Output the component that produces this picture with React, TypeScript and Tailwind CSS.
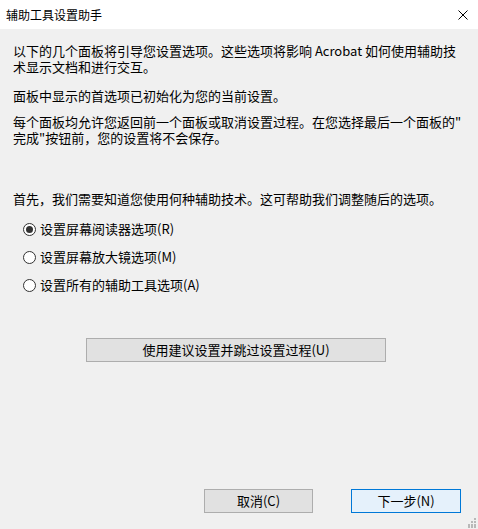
import React from "react";

const font = { fontFamily: '"Noto Sans CJK SC", "Noto Sans", sans-serif' };

function Radio({ checked, label }: { checked?: boolean; label: string }) {
  return (
    <label className="flex items-center h-[28px] gap-[4px]">
      <span className="w-[13px] h-[13px] rounded-full border border-[#333] bg-white flex items-center justify-center">
        {checked && <span className="w-[7px] h-[7px] rounded-full bg-[#333]" />}
      </span>
      <span>{label}</span>
    </label>
  );
}

export default function App() {
  return (
    <div
      className="w-[478px] h-[529px] flex flex-col bg-[#f0f0f0] text-[13px] text-black overflow-hidden"
      style={font}
    >
      {/* title bar */}
      <div className="h-[29px] bg-white flex items-center justify-between pl-[6px] pr-[10px] shrink-0">
        <span className="text-[12px]">辅助工具设置助手</span>
        <svg width="10" height="10" viewBox="0 0 10 10">
          <path d="M0.5 0.5 L9.5 9.5 M9.5 0.5 L0.5 9.5" stroke="#000" strokeWidth="1" />
        </svg>
      </div>

      <div className="flex-1 flex flex-col px-[13px] pt-[14px] leading-[16px] relative">
        <p>
          以下的几个面板将引导您设置选项。这些选项将影响 Acrobat 如何使用辅助技术显示文档和进行交互。
        </p>
        <p className="mt-[13px]">面板中显示的首选项已初始化为您的当前设置。</p>
        <p className="mt-[10px]">
          每个面板均允许您返回前一个面板或取消设置过程。在您选择最后一个面板的"
          <br />
          完成"按钮前，您的设置将不会保存。
        </p>
        <p className="mt-[45px]">首先，我们需要知道您使用何种辅助技术。这可帮助我们调整随后的选项。</p>

        <div className="flex flex-col pl-[10px] mt-[8px]">
          <Radio checked label="设置屏幕阅读器选项(R)" />
          <Radio label="设置屏幕放大镜选项(M)" />
          <Radio label="设置所有的辅助工具选项(A)" />
        </div>

        <div className="flex justify-center mt-[39px] pr-[6px]">
          <button className="w-[300px] h-[24px] bg-[#e1e1e1] border border-[#adadad] flex items-center justify-center">
            使用建议设置并跳过设置过程(U)
          </button>
        </div>

        <div className="flex-1" />

        <div className="flex justify-end gap-[38px] pr-[4px] mb-[16px]">
          <button className="w-[109px] h-[24px] bg-[#e1e1e1] border border-[#adadad] flex items-center justify-center">
            取消(C)
          </button>
          <button className="w-[110px] h-[24px] bg-[#e5f1fb] border border-[#0078d7] flex items-center justify-center">
            下一步(N)
          </button>
        </div>

        {/* resize grip */}
        <svg width="10" height="10" viewBox="0 0 10 10" className="absolute right-[2px] bottom-[1px]">
          {[
            [8, 0], [8, 3], [8, 6], [5, 3], [5, 6], [2, 6], [8, 8], [5, 8], [2, 8],
          ].map(([x, y], i) => (
            <rect key={i} x={x} y={y} width="2" height="2" fill="#b8b8b8" />
          ))}
        </svg>
      </div>
    </div>
  );
}
